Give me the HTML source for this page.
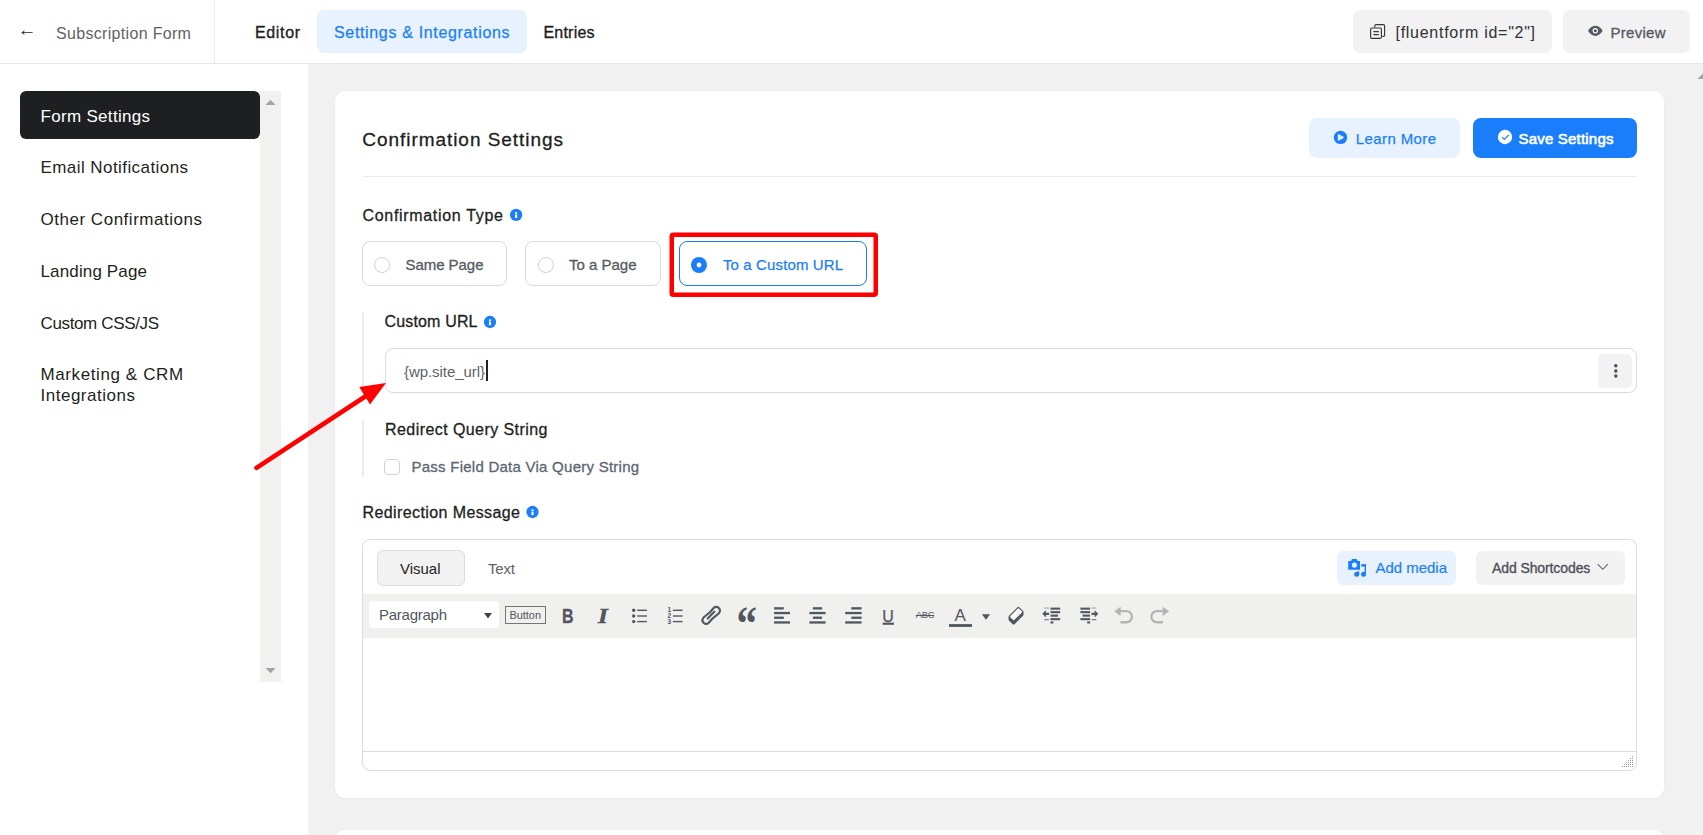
<!DOCTYPE html>
<html lang="en">
<head>
<meta charset="utf-8">
<title>Subscription Form - Settings &amp; Integrations</title>
<style>
html,body{margin:0;padding:0;}
body{width:1703px;height:835px;overflow:hidden;position:relative;background:#f1f1f1;font-family:"Liberation Sans",sans-serif;color:#1e1f21;}
.b{position:absolute;box-sizing:border-box;}
.t{position:absolute;white-space:nowrap;line-height:1;margin:0;padding:0;font-weight:400;}
svg{position:absolute;overflow:visible;}
a{text-decoration:none;}
ul{list-style:none;margin:0;padding:0;}
</style>
</head>
<body>
<header>
<div class="b" style="left:0px;top:0px;width:1703px;height:64px;background:#fff;border-bottom:1px solid #e6e6e6;"></div>
<div class="b" style="left:214px;top:0px;width:1px;height:63px;background:#ececec;"></div>
<span class="t" style="left:17.4px;top:19.5px;font-size:19px;color:#2b2b2b;">←</span>
<span class="t" style="left:56.0px;top:25.8px;font-size:16px;color:#606266;letter-spacing:0.32px;">Subscription Form</span>
<nav>
<a class="t" style="left:255.0px;top:24.5px;font-size:16px;color:#1e1f21;letter-spacing:0.64px;-webkit-text-stroke:0.35px #1e1f21;">Editor</a>
<div class="b" style="left:317px;top:10px;width:210px;height:43px;background:#e8f2ff;border-radius:7px;"></div>
<a class="t" style="left:334.0px;top:24.5px;font-size:16px;color:#1a7efb;letter-spacing:0.66px;-webkit-text-stroke:0.25px #1a7efb;">Settings &amp; Integrations</a>
<a class="t" style="left:543.5px;top:24.5px;font-size:16px;color:#1e1f21;letter-spacing:0.20px;-webkit-text-stroke:0.35px #1e1f21;">Entries</a>
</nav>
<div class="b" style="left:1353px;top:10px;width:198.5px;height:43px;background:#f2f2f2;border-radius:7px;"></div>
<span class="t" style="left:1395.5px;top:24.5px;font-size:16px;color:#2f3033;letter-spacing:0.72px;">[fluentform id="2"]</span>
<div class="b" style="left:1563px;top:10px;width:126.5px;height:43px;background:#f2f2f2;border-radius:7px;"></div>
<span class="t" style="left:1610.5px;top:25.3px;font-size:15px;color:#565a63;letter-spacing:0.27px;-webkit-text-stroke:0.3px #565a63;">Preview</span>
</header>
<aside>
<div class="b" style="left:0px;top:64px;width:308px;height:771px;background:#fff;"></div>
<div class="b" style="left:260px;top:91px;width:21px;height:591px;background:#f1f1f0;"></div>
<svg style="left:265px;top:99px" width="11" height="6" viewBox="0 0 11 6"><path d="M0.5 6 L5.5 0.8 L10.5 6 Z" fill="#a3a3a3"/></svg>
<svg style="left:265px;top:667.8px" width="11" height="6" viewBox="0 0 11 6"><path d="M0.5 0 L5.5 5.2 L10.5 0 Z" fill="#a3a3a3"/></svg>
<div class="b" style="left:20px;top:91px;width:240px;height:48px;background:#1e1f21;border-radius:6px;"></div>
<ul>
<li class="t" style="left:40.5px;top:107.6px;font-size:17px;color:#fff;letter-spacing:0.31px;">Form Settings</li>
<li class="t" style="left:40.5px;top:159.1px;font-size:17px;color:#1e1f21;letter-spacing:0.43px;">Email Notifications</li>
<li class="t" style="left:40.5px;top:210.6px;font-size:17px;color:#1e1f21;letter-spacing:0.52px;">Other Confirmations</li>
<li class="t" style="left:40.5px;top:262.6px;font-size:17px;color:#1e1f21;letter-spacing:0.14px;">Landing Page</li>
<li class="t" style="left:40.5px;top:314.6px;font-size:17px;color:#1e1f21;letter-spacing:-0.36px;">Custom CSS/JS</li>
<li>
<span class="t" style="left:40.5px;top:366.1px;font-size:17px;color:#1e1f21;letter-spacing:0.60px;">Marketing &amp; CRM</span>
<span class="t" style="left:40.5px;top:387.1px;font-size:17px;color:#1e1f21;letter-spacing:0.51px;">Integrations</span>
</li>
</ul>
</aside>
<main>
<svg style="left:1696.5px;top:72.5px" width="11" height="6" viewBox="0 0 11 6"><path d="M0.5 6 L5.5 0.8 L10.5 6 Z" fill="#a3a3a3"/></svg>
<div class="b" style="left:335px;top:91px;width:1329px;height:707px;background:#fff;border-radius:10px;box-shadow:0 1px 3px rgba(0,0,0,0.04);"></div>
<div class="b" style="left:335px;top:830px;width:1329px;height:70px;background:#fff;border-radius:10px;"></div>
<h2 class="t" style="left:362.3px;top:130.1px;font-size:19px;color:#1e1f21;letter-spacing:0.95px;-webkit-text-stroke:0.3px #1e1f21;">Confirmation Settings</h2>
<div class="b" style="left:1309px;top:118px;width:151px;height:40px;background:#e8f2ff;border-radius:8px;"></div>
<span class="t" style="left:1355.8px;top:130.9px;font-size:15px;color:#1a7efb;letter-spacing:0.39px;-webkit-text-stroke:0.25px #1a7efb;">Learn More</span>
<div class="b" style="left:1473px;top:118px;width:164px;height:40px;background:#1a7efb;border-radius:8px;"></div>
<span class="t" style="left:1518.5px;top:131.0px;font-size:15px;color:#fff;letter-spacing:0.20px;-webkit-text-stroke:0.6px #fff;">Save Settings</span>
<div class="b" style="left:362px;top:176px;width:1275px;height:1px;background:#ececec;"></div>
<label class="t" style="left:362.5px;top:208.0px;font-size:16px;color:#1e1f21;letter-spacing:0.68px;-webkit-text-stroke:0.3px #1e1f21;">Confirmation Type</label>
<div class="b" style="left:362px;top:241px;width:145px;height:45px;background:#fff;border:1px solid #d8dbe0;border-radius:8px;"></div>
<div class="b" style="left:374px;top:257px;width:16px;height:16px;border:1px solid #cfd2d8;border-radius:50%;background:#fff;"></div>
<span class="t" style="left:405.5px;top:256.8px;font-size:15px;color:#565a63;letter-spacing:-0.05px;-webkit-text-stroke:0.3px #565a63;">Same Page</span>
<div class="b" style="left:525px;top:241px;width:136px;height:45px;background:#fff;border:1px solid #d8dbe0;border-radius:8px;"></div>
<div class="b" style="left:537.5px;top:257px;width:16.0px;height:16px;border:1px solid #cfd2d8;border-radius:50%;background:#fff;"></div>
<span class="t" style="left:569.0px;top:256.8px;font-size:15px;color:#565a63;letter-spacing:-0.01px;-webkit-text-stroke:0.3px #565a63;">To a Page</span>
<div class="b" style="left:679px;top:241px;width:188px;height:45px;background:#fff;border:1px solid #1a7efb;border-radius:8px;"></div>
<svg style="left:691px;top:256.5px" width="16" height="16" viewBox="0 0 16 16"><circle cx="8" cy="8" r="8" fill="#1a7efb"/><circle cx="8" cy="8" r="2.4" fill="#fff"/></svg>
<span class="t" style="left:723.0px;top:256.8px;font-size:15px;color:#1a7efb;letter-spacing:0.12px;-webkit-text-stroke:0.25px #1a7efb;">To a Custom URL</span>
<svg style="left:0;top:0" width="1703" height="400" viewBox="0 0 1703 400"><rect x="671.75" y="234.75" width="204" height="60" rx="1.5" fill="none" stroke="#ff0000" stroke-width="4.5" stroke-linejoin="round"/></svg>
<div class="b" style="left:362px;top:313px;width:2px;height:80px;background:#ebebeb;"></div>
<label class="t" style="left:384.5px;top:314.0px;font-size:16px;color:#1e1f21;letter-spacing:0.16px;-webkit-text-stroke:0.3px #1e1f21;">Custom URL</label>
<div class="b" style="left:385px;top:348px;width:1252px;height:45px;background:#fff;border:1px solid #d8dbe0;border-radius:8px;"></div>
<span class="t" style="left:404.0px;top:363.7px;font-size:15px;color:#606266;letter-spacing:-0.06px;">{wp.site_url}</span>
<div class="b" style="left:486px;top:360px;width:1.5px;height:20.5px;background:#222;"></div>
<div class="b" style="left:1598px;top:354px;width:34px;height:34px;background:#f2f2f2;border-radius:5px;"></div>
<div class="b" style="left:362px;top:420px;width:2px;height:56.5px;background:#ebebeb;"></div>
<label class="t" style="left:385.0px;top:421.5px;font-size:16px;color:#1e1f21;letter-spacing:0.43px;-webkit-text-stroke:0.3px #1e1f21;">Redirect Query String</label>
<div class="b" style="left:384px;top:459px;width:16px;height:16px;border:1px solid #cfd2d8;border-radius:4px;background:#fff;"></div>
<span class="t" style="left:411.5px;top:458.8px;font-size:15px;color:#5e6573;letter-spacing:0.25px;-webkit-text-stroke:0.3px #5e6573;">Pass Field Data Via Query String</span>
<label class="t" style="left:362.5px;top:505.0px;font-size:16px;color:#1e1f21;letter-spacing:0.40px;-webkit-text-stroke:0.3px #1e1f21;">Redirection Message</label>
<div class="b" style="left:362px;top:539px;width:1275px;height:232px;background:#fff;border:1px solid #dcdcde;border-radius:8px;overflow:hidden;"><div class="b" style="left:0;top:54px;width:1273px;height:44px;background:#f0f0ef;"></div><div class="b" style="left:0;top:211px;width:1273px;height:1px;background:#dcdcde;"></div></div>
<div class="b" style="left:377px;top:550px;width:88px;height:36px;background:#f2f2f2;border:1px solid #dedede;border-radius:6px;"></div>
<span class="t" style="left:400.0px;top:561.3px;font-size:15px;color:#1e1f21;letter-spacing:-0.02px;">Visual</span>
<span class="t" style="left:488.0px;top:561.3px;font-size:15px;color:#606266;letter-spacing:-0.17px;">Text</span>
<div class="b" style="left:1337px;top:551px;width:119px;height:34px;background:#e8f2ff;border-radius:6px;"></div>
<span class="t" style="left:1375.6px;top:560.3px;font-size:15px;color:#1a7efb;letter-spacing:-0.04px;-webkit-text-stroke:0.2px #1a7efb;">Add media</span>
<div class="b" style="left:1476px;top:551px;width:149px;height:34px;background:#f2f2f2;border-radius:6px;"></div>
<span class="t" style="left:1492.0px;top:561.1px;font-size:14px;color:#4b4f56;letter-spacing:-0.10px;-webkit-text-stroke:0.3px #4b4f56;">Add Shortcodes</span>
<div class="b" style="left:369px;top:601px;width:130px;height:27px;background:#fff;border-radius:4px;"></div>
<span class="t" style="left:379.0px;top:607.1px;font-size:15px;color:#50575e;letter-spacing:-0.26px;">Paragraph</span>
<svg style="left:484px;top:613px" width="8" height="6" viewBox="0 0 8 6"><path d="M0 0 H8 L4 5.5 Z" fill="#444"/></svg>
<div class="b" style="left:505px;top:606px;width:41px;height:18px;border:1px solid #757575;"></div>
<span class="t" style="left:509.5px;top:609.7px;font-size:11px;color:#50575e;letter-spacing:-0.06px;">Button</span>
</main>
<svg style="left:0;top:0" width="1703" height="835" viewBox="0 0 1703 835"><line x1="256.5" y1="467.8" x2="366" y2="396" stroke="#ff0000" stroke-width="4.6" stroke-linecap="round"/><polygon points="385.9,383 359.3,387 370,404.5" fill="#ff0000"/></svg>
<svg style="left:0;top:0" width="1703" height="835" viewBox="0 0 1703 835">
<g fill="none" stroke="#33353a" stroke-width="1.12"><rect x="1370.6" y="28" width="10.8" height="10.4" rx="1.2"/><path d="M1374.8 27.6 V25.8 a1.2 1.2 0 0 1 1.2 -1.2 H1383.4 a1.2 1.2 0 0 1 1.2 1.2 V35.2 a1.2 1.2 0 0 1 -1.2 1.2 H1382.4"/><path d="M1373.4 31.6 H1378.8 M1373.4 34.6 H1378.8"/></g>
<path d="M1588 30.8 C1590 27.3 1592.6 25.7 1595.35 25.7 S1600.7 27.3 1602.7 30.8 C1600.7 34.3 1598.1 35.9 1595.35 35.9 S1590 34.3 1588 30.8 Z" fill="#565a63"/><circle cx="1595.3" cy="30.8" r="2.7" fill="#f4f4f4"/><circle cx="1595.3" cy="30.8" r="1.4" fill="#3c4048"/>
<circle cx="1340.5" cy="137.4" r="6.7" fill="#1a7efb"/><path d="M1338.3 134.4 L1343.6 137.4 L1338.3 140.4 Z" fill="#e8f2ff" stroke="#e8f2ff" stroke-width="1" stroke-linejoin="round"/>
<circle cx="1505" cy="137" r="7.15" fill="#fff"/><path d="M1502 137.2 L1504.4 139.5 L1508.8 134.9" fill="none" stroke="#1a7efb" stroke-width="1.15"/>
<circle cx="516.1" cy="214.8" r="6.15" fill="#1a7efb"/><rect x="515.05" y="212.20" width="2.1" height="1.6" fill="#fff"/><rect x="515.05" y="214.40" width="2.1" height="3.6" fill="#fff"/>
<circle cx="490" cy="322" r="6.15" fill="#1a7efb"/><rect x="488.95" y="319.40" width="2.1" height="1.6" fill="#fff"/><rect x="488.95" y="321.60" width="2.1" height="3.6" fill="#fff"/>
<circle cx="532.5" cy="512" r="6.15" fill="#1a7efb"/><rect x="531.45" y="509.40" width="2.1" height="1.6" fill="#fff"/><rect x="531.45" y="511.60" width="2.1" height="3.6" fill="#fff"/>
<g fill="#4b4f56"><circle cx="1615.8" cy="365.7" r="1.75"/><circle cx="1615.8" cy="370.9" r="1.75"/><circle cx="1615.8" cy="376.1" r="1.75"/></g>
<g fill="#1a7efb"><path d="M1348.2 561 H1351 L1352 559 H1356.6 L1357.6 561 H1360 V569.7 H1348.2 Z"/><circle cx="1354.4" cy="565.1" r="2.6" fill="#e8f2ff"/><rect x="1361.2" y="564.2" width="4.8" height="2.4"/><rect x="1364.6" y="564.2" width="1.4" height="10.2"/><circle cx="1363.6" cy="574.3" r="2.5"/><circle cx="1356.7" cy="574.3" r="2.5"/><path d="M1357.6 574 V571.6 L1359.2 570.8 V574 Z"/></g>
<path d="M1597.6 564.2 L1602.75 569.3 L1607.9 564.2" fill="none" stroke="#606266" stroke-width="1.1"/>
<g fill="#50575e">
<circle cx="633.7" cy="610.3" r="1.7"/><rect x="637.2" y="609.6" width="9.7" height="1.4"/>
<rect x="672.9" y="609.6" width="9.7" height="1.4"/>
<circle cx="633.7" cy="616" r="1.7"/><rect x="637.2" y="615.3" width="9.7" height="1.4"/>
<rect x="672.9" y="615.3" width="9.7" height="1.4"/>
<circle cx="633.7" cy="621.6" r="1.7"/><rect x="637.2" y="620.9" width="9.7" height="1.4"/>
<rect x="672.9" y="620.9" width="9.7" height="1.4"/>
<rect x="774.1" y="607.2" width="9.7" height="2.3"/>
<rect x="812.9" y="607.2" width="9.2" height="2.3"/>
<rect x="851.3" y="607.2" width="10.3" height="2.3"/>
<rect x="774.1" y="611.9" width="15.9" height="2.3"/>
<rect x="809.4" y="611.9" width="16.2" height="2.3"/>
<rect x="845.2" y="611.9" width="16.4" height="2.3"/>
<rect x="774.1" y="616.6" width="9.7" height="2.3"/>
<rect x="812.9" y="616.6" width="9.2" height="2.3"/>
<rect x="851.3" y="616.6" width="10.3" height="2.3"/>
<rect x="774.1" y="621.3" width="15.9" height="2.3"/>
<rect x="809.4" y="621.3" width="16.2" height="2.3"/>
<rect x="845.2" y="621.3" width="16.4" height="2.3"/>
<rect x="882.7" y="622.6" width="11.3" height="2.2"/>
<rect x="949" y="624.1" width="23" height="2.8"/>
<path d="M981.9 614.2 H990.1 L986 619.8 Z"/>
</g>
<g fill="none" stroke="#50575e" stroke-width="2.1" stroke-linecap="round" stroke-linejoin="round"><path d="M709.3 613 L713.6 608 A3.7 3.7 0 0 1 718.9 613.2 L713.9 617.4"/><path d="M708.6 613.3 L703.3 617.8 A3.7 3.7 0 0 0 708.5 623 L713 618"/><path d="M707.7 618.5 L714.3 611.7"/></g>
<path d="M1018.4 608.1 L1022.3 611.9 V614.6 L1013.6 623.3 L1009.8 619.6 V616.6 Z" fill="#50575e" stroke="#50575e" stroke-width="2.5" stroke-linejoin="round"/><path d="M1018.4 609.5 L1020.9 611.9 L1013.7 619 L1011.3 616.6 Z" fill="#f8f8f7" stroke="#f8f8f7" stroke-width="2.3" stroke-linejoin="round"/>
<g fill="#50575e"><rect x="1050.5" y="607.6" width="9.7" height="2.1"/><rect x="1050.5" y="611.1" width="9.7" height="2.1"/><rect x="1050.5" y="614.6" width="7.5" height="2.1"/><rect x="1050.5" y="618.1" width="9.7" height="2.1"/><rect x="1050.5" y="621.4" width="2.9" height="2.1"/><path d="M1042.3 613.8 L1045.9 610.2 V612.7 H1049.1 V614.9 H1045.9 V617.4 Z"/><rect x="1044.3" y="607.6" width="4.8" height="0.9" opacity="0.6"/><rect x="1044.3" y="619.3" width="4.8" height="0.9"/></g>
<g fill="#50575e" transform="translate(2178.1 0) scale(-1 1)"><rect x="1088.0" y="607.6" width="9.7" height="2.1"/><rect x="1088.0" y="611.1" width="9.7" height="2.1"/><rect x="1088.0" y="614.6" width="7.5" height="2.1"/><rect x="1088.0" y="618.1" width="9.7" height="2.1"/><rect x="1088.0" y="621.4" width="2.9" height="2.1"/><path d="M1079.8 613.8 L1083.4 610.2 V612.7 H1086.6 V614.9 H1083.4 V617.4 Z"/><rect x="1081.8" y="607.6" width="4.8" height="0.9" opacity="0.6"/><rect x="1081.8" y="619.3" width="4.8" height="0.9"/></g>
<path d="M1114.2 611.3 L1120.6 606.7 V610 H1126.4 A6.7 6.7 0 0 1 1126.4 623.4 H1120.4 V621.1 H1126.4 A4.4 4.4 0 0 0 1126.4 612.3 H1120.6 V615.9 Z" fill="#b4b4b4"/>
<path d="M1169.1 611.3 L1162.7 606.7 V610 H1156.9 A6.7 6.7 0 0 0 1156.9 623.4 H1162.9 V621.1 H1156.9 A4.4 4.4 0 0 1 1156.9 612.3 H1162.7 V615.9 Z" fill="#b4b4b4"/>
<g fill="#9a9a9a"><rect x="1632" y="756" width="1" height="1"/><rect x="1630" y="758" width="1" height="1"/><rect x="1632" y="758" width="1" height="1"/><rect x="1628" y="760" width="1" height="1"/><rect x="1630" y="760" width="1" height="1"/><rect x="1632" y="760" width="1" height="1"/><rect x="1626" y="762" width="1" height="1"/><rect x="1628" y="762" width="1" height="1"/><rect x="1630" y="762" width="1" height="1"/><rect x="1632" y="762" width="1" height="1"/><rect x="1624" y="764" width="1" height="1"/><rect x="1626" y="764" width="1" height="1"/><rect x="1628" y="764" width="1" height="1"/><rect x="1630" y="764" width="1" height="1"/><rect x="1632" y="764" width="1" height="1"/><rect x="1622" y="766" width="1" height="1"/><rect x="1624" y="766" width="1" height="1"/><rect x="1626" y="766" width="1" height="1"/><rect x="1628" y="766" width="1" height="1"/><rect x="1630" y="766" width="1" height="1"/><rect x="1632" y="766" width="1" height="1"/></g>
</svg>
<span class="t" style="left:561.9px;top:606.2px;font-size:20px;font-weight:700;color:#50575e;-webkit-text-stroke:0.3px #50575e;transform:scaleX(0.8);transform-origin:0 0;">B</span>
<span class="t" style="left:597.9px;top:605.5px;font-size:21px;font-weight:700;font-style:italic;font-family:'Liberation Serif',serif;color:#50575e;-webkit-text-stroke:0.5px #50575e;transform:scaleX(1.2);transform-origin:0 0;">I</span>
<span class="t" style="left:667.4px;top:607.3px;font-size:6.5px;font-weight:700;color:#50575e;">1</span>
<span class="t" style="left:667.4px;top:613px;font-size:6.5px;font-weight:700;color:#50575e;">2</span>
<span class="t" style="left:667.4px;top:618.6px;font-size:6.5px;font-weight:700;color:#50575e;">3</span>
<span class="t" style="left:736.6px;top:600.9px;font-size:41px;transform:scaleY(1.16);transform-origin:0 0;font-weight:700;font-family:'Liberation Serif',serif;color:#50575e;">“</span>
<span class="t" style="left:882.2px;top:608.7px;font-size:16px;color:#50575e;-webkit-text-stroke:0.25px #50575e;">U</span>
<span class="t" style="left:915.8px;top:610.2px;font-size:9.5px;color:#50575e;text-decoration:line-through;letter-spacing:-0.4px;">ABC</span>
<span class="t" style="left:954.6px;top:607.3px;font-size:17px;color:#50575e;">A</span>
</body>
</html>
